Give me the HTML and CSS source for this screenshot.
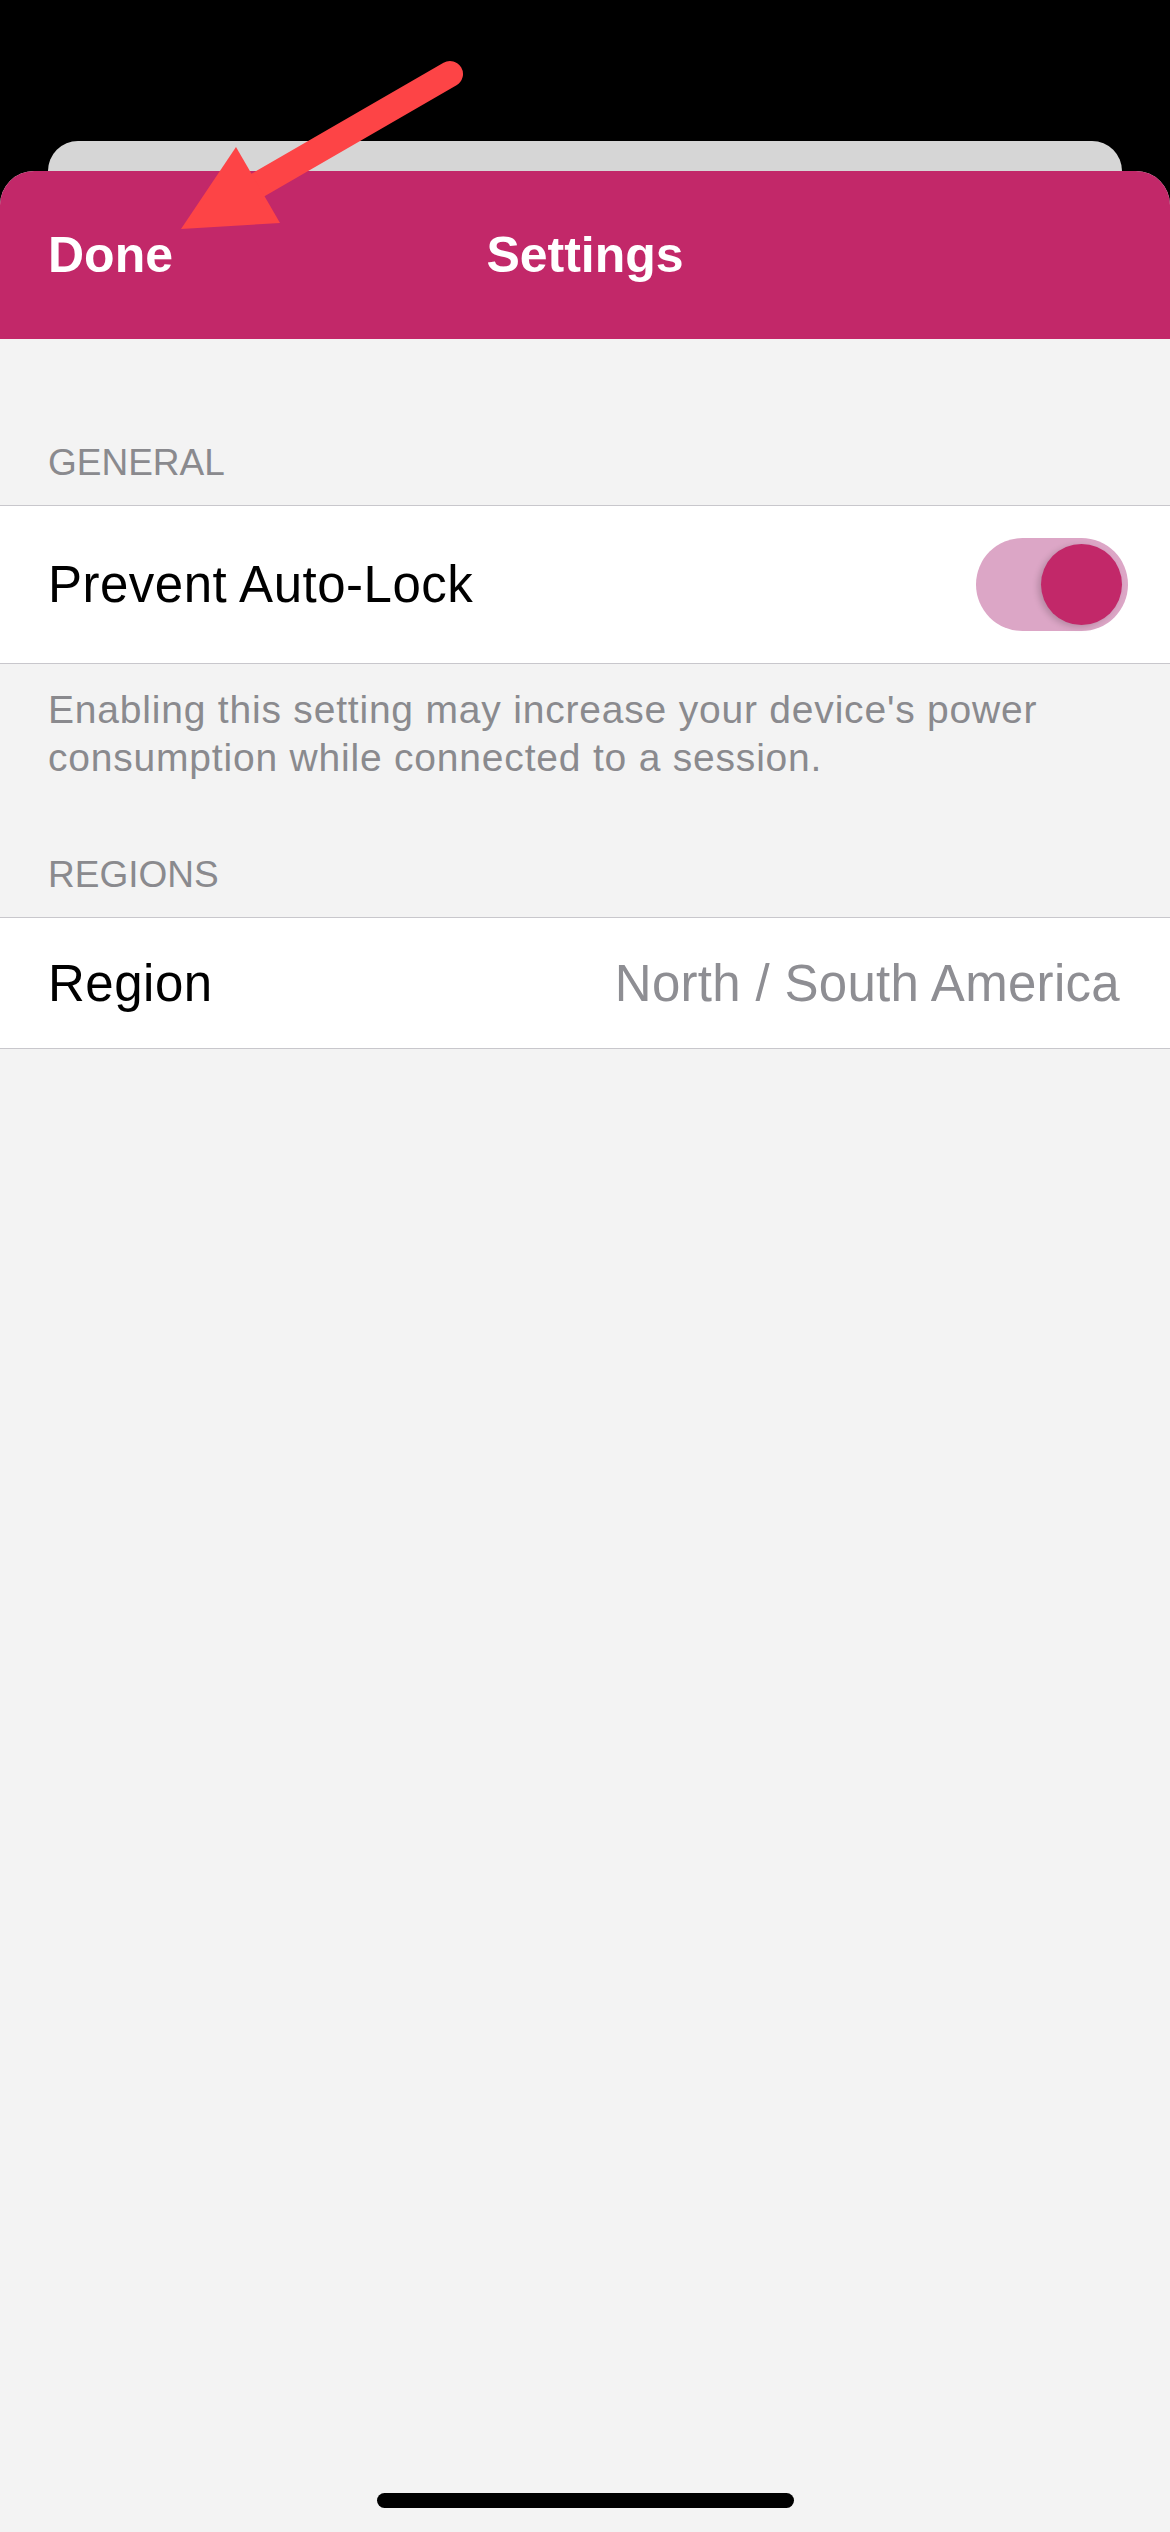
FILE: index.html
```html
<!DOCTYPE html>
<html lang="en">
<head>
    <meta charset="UTF-8">
    <meta name="viewport" content="width=device-width, initial-scale=1.0">
    <title>Settings</title>
    <link rel="stylesheet" href="styles.css">
</head>
<body>
    <div class="backdrop">
        <div class="card-behind"></div>
    </div>

    <div class="sheet">
        <header class="nav">
            <span class="nav-done">Done</span>
            <span class="nav-title">Settings</span>
            <span></span>
        </header>

        <div class="content">
            <div class="section-title">GENERAL</div>
            <div class="row">
                <span class="row-label">Prevent Auto-Lock</span>
                <div class="toggle on"><div class="knob"></div></div>
            </div>
            <p class="section-note">Enabling this setting may increase your device's power consumption while connected to a session.</p>

            <div class="section-title second">REGIONS</div>
            <div class="row short">
                <span class="row-label">Region</span>
                <span class="row-value">North / South America</span>
            </div>
        </div>

        <div class="home-bar"></div>
    </div>

    <!-- annotation arrow pointing at Done -->
    <svg class="arrow" width="1170" height="260" viewBox="0 0 1170 260">
        <path d="M450 74 L258 185" stroke="#fd4446" stroke-width="26" stroke-linecap="round" fill="none"/>
        <polygon points="181,229 236,147 280,223" fill="#fd4446"/>
    </svg>
</body>
</html>
```

FILE: styles.css
```css
* {
    margin: 0;
    padding: 0;
    box-sizing: border-box;
    font-family: 'Liberation Sans', Arial, sans-serif;
}

body {
    background: #000;
    min-height: 100vh;
    display: flex;
    flex-direction: column;
    position: relative;
}

.backdrop {
    height: 171px;
    padding-top: 141px;
}

.card-behind {
    height: 30px;
    margin: 0 48px;
    background: #d6d6d6;
    border-radius: 30px 30px 0 0;
}

.sheet {
    flex: 1;
    display: flex;
    flex-direction: column;
    background: #f3f3f3;
    border-radius: 34px 34px 0 0;
    overflow: hidden;
}

.nav {
    height: 168px;
    background: #c22869;
    color: #fff;
    display: grid;
    grid-template-columns: 1fr auto 1fr;
    align-items: center;
    padding: 0 48px;
    font-size: 50px;
    font-weight: bold;
    line-height: 60px;
}

.nav-title {
    text-align: center;
}

.content {
    padding-top: 101px;
}

.section-title {
    padding: 0 48px;
    font-size: 37px;
    line-height: 45px;
    color: #8a8a8e;
    margin-bottom: 20px;
}

.section-title.second {
    margin-top: 70px;
}

.row {
    height: 159px;
    background: #fff;
    border-top: 1px solid #c8c7cc;
    border-bottom: 1px solid #c8c7cc;
    display: flex;
    align-items: center;
    justify-content: space-between;
    padding: 0 42px 0 48px;
}

.row.short {
    height: 132px;
    padding-right: 50px;
}

.row-label {
    font-size: 51px;
    line-height: 61px;
    letter-spacing: 0.5px;
    color: #000;
}

.row-value {
    font-size: 51px;
    line-height: 61px;
    letter-spacing: 0.3px;
    color: #8e8e93;
}

.toggle {
    width: 152px;
    height: 93px;
    border-radius: 47px;
    background: #dca6c6;
    padding: 6px;
    display: flex;
    justify-content: flex-end;
}

.knob {
    width: 81px;
    height: 81px;
    border-radius: 50%;
    background: #c22869;
    box-shadow: -3px 2px 6px rgba(0,0,0,0.18);
}

.section-note {
    padding: 22px 48px 0;
    font-size: 39px;
    line-height: 48px;
    letter-spacing: 0.8px;
    color: #8a8a8e;
}

.home-bar {
    width: 417px;
    height: 15px;
    border-radius: 8px;
    background: #000;
    margin: auto auto 24px;
}

.arrow {
    position: absolute;
    top: 0;
    left: 0;
}
```
